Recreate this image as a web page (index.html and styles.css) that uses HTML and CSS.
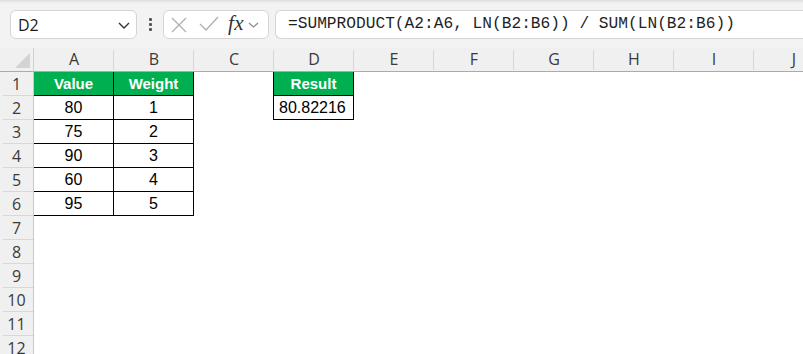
FILE: index.html
```html
<!DOCTYPE html>
<html>
<head>
<meta charset="utf-8">
<link rel="stylesheet" href="styles.css">
</head>
<body>
<div class="topbar">
  <div class="namebox">
    <span class="nb-text">D2</span>
    <svg class="nb-chev" width="12" height="7" viewBox="0 0 12 7"><path d="M1 1 L6 6 L11 1" fill="none" stroke="#333" stroke-width="1.4"/></svg>
  </div>
  <div class="vdots"><span></span><span></span><span></span></div>
  <div class="fxbox">
    <svg class="ic-x" width="16" height="16" viewBox="0 0 16 16"><path d="M1 1 L15 15 M15 1 L1 15" stroke="#b0b0b0" stroke-width="1.3" fill="none"/></svg>
    <svg class="ic-check" width="20" height="15" viewBox="0 0 20 15"><path d="M1 8 L7 14 L19 1" stroke="#b0b0b0" stroke-width="1.3" fill="none"/></svg>
    <span class="fx">fx</span>
    <svg class="fx-chev" width="11" height="6" viewBox="0 0 11 6"><path d="M1 1 L5.5 5 L10 1" fill="none" stroke="#8a8a8a" stroke-width="1.2"/></svg>
  </div>
  <div class="formula">=SUMPRODUCT(A2:A6, LN(B2:B6)) / SUM(LN(B2:B6))</div>
</div>

<div class="sheet">
  <div class="corner"><div class="tri"></div></div>
  <div class="colh">A</div><div class="colh">B</div><div class="colh">C</div><div class="colh">D</div><div class="colh">E</div><div class="colh">F</div><div class="colh">G</div><div class="colh">H</div><div class="colh">I</div><div class="colh">J</div>

  <div class="rowh">1</div>
  <div class="c hd first">Value</div><div class="c hd">Weight</div><div class="c"></div><div class="c hd first">Result</div><div class="c"></div><div class="c"></div><div class="c"></div><div class="c"></div><div class="c"></div><div class="c"></div>

  <div class="rowh">2</div>
  <div class="c bd first">80</div><div class="c bd">1</div><div class="c"></div><div class="c bd first left">80.82216</div><div class="c"></div><div class="c"></div><div class="c"></div><div class="c"></div><div class="c"></div><div class="c"></div>

  <div class="rowh">3</div>
  <div class="c bd first">75</div><div class="c bd">2</div><div class="c"></div><div class="c"></div><div class="c"></div><div class="c"></div><div class="c"></div><div class="c"></div><div class="c"></div><div class="c"></div>

  <div class="rowh">4</div>
  <div class="c bd first">90</div><div class="c bd">3</div><div class="c"></div><div class="c"></div><div class="c"></div><div class="c"></div><div class="c"></div><div class="c"></div><div class="c"></div><div class="c"></div>

  <div class="rowh">5</div>
  <div class="c bd first">60</div><div class="c bd">4</div><div class="c"></div><div class="c"></div><div class="c"></div><div class="c"></div><div class="c"></div><div class="c"></div><div class="c"></div><div class="c"></div>

  <div class="rowh">6</div>
  <div class="c bd first">95</div><div class="c bd">5</div><div class="c"></div><div class="c"></div><div class="c"></div><div class="c"></div><div class="c"></div><div class="c"></div><div class="c"></div><div class="c"></div>

  <div class="rowh">7</div><div class="c span"></div>
  <div class="rowh">8</div><div class="c span"></div>
  <div class="rowh">9</div><div class="c span"></div>
  <div class="rowh">10</div><div class="c span"></div>
  <div class="rowh">11</div><div class="c span"></div>
  <div class="rowh">12</div><div class="c span"></div>
</div>
</body>
</html>
```

FILE: styles.css
```css
html, body {
  margin: 0;
  padding: 0;
  background: #ffffff;
  overflow: hidden;
  width: 803px;
  height: 354px;
}
body {
  font-family: "Liberation Sans", Arial, sans-serif;
  color: #000;
}

.topbar {
  height: 48px;
  box-sizing: border-box;
  background: linear-gradient(#dcdcdc 0px, #ececec 2px, #f3f3f3 4px, #f3f3f3 100%);
  display: flex;
  align-items: flex-start;
  padding: 10px 0 0 10px;
  white-space: nowrap;
}
.namebox {
  width: 127px;
  height: 29px;
  box-sizing: border-box;
  background: #fff;
  border: 1px solid #d4d4d4;
  border-radius: 6px;
  display: flex;
  align-items: center;
  padding: 0 6px 0 7px;
  justify-content: space-between;
}
.nb-text {
  font-family: "Open Sans", "Noto Sans", sans-serif;
  font-size: 16px;
  color: #1a1a1a;
}
.nb-chev { margin-top: 1px; }
.vdots {
  width: 26px;
  height: 29px;
  display: flex;
  flex-direction: column;
  align-items: center;
  justify-content: center;
  gap: 2px;
}
.vdots span {
  width: 3px;
  height: 3px;
  background: #555;
  border-radius: 1px;
}
.fxbox {
  width: 106px;
  height: 29px;
  box-sizing: border-box;
  background: #fff;
  border: 1px solid #d4d4d4;
  border-radius: 6px;
  display: flex;
  align-items: center;
  padding: 0 0 0 7px;
}
.ic-x { margin-right: 12px; }
.ic-check { margin-right: 9px; margin-top: -2px; }
.fx {
  font-family: "Liberation Serif", "DejaVu Serif", serif;
  font-style: italic;
  font-size: 21px;
  color: #333;
  margin-right: 4px;
  margin-top: -2px;
  letter-spacing: 0.5px;
}
.fx-chev { margin-top: 1px; }
.formula {
  margin-left: 6px;
  flex: 1;
  height: 29px;
  box-sizing: border-box;
  background: #fff;
  border: 1px solid #d4d4d4;
  border-right: none;
  border-radius: 6px 0 0 6px;
  padding-left: 12px;
  font-family: "Liberation Mono", "DejaVu Sans Mono", monospace;
  font-size: 16.2px;
  line-height: 27px;
  color: #1f1f1f;
}

.sheet {
  display: grid;
  grid-template-columns: 34px repeat(10, 80px);
  grid-template-rows: 24px;
  grid-auto-rows: 24px;
}
.corner {
  background: #f0f0f0;
  border-bottom: 1px solid #ababab;
  border-right: 1px solid #d0d0d0;
  box-sizing: border-box;
  position: relative;
}
.tri {
  position: absolute;
  right: 3px;
  bottom: 3px;
  width: 0;
  height: 0;
  border-left: 15px solid transparent;
  border-bottom: 15px solid #d3d3d3;
}
.colh {
  background: #f0f0f0;
  border-bottom: 1px solid #ababab;
  box-sizing: border-box;
  text-align: center;
  font-family: "Open Sans", "Noto Sans", sans-serif;
  font-size: 16px;
  line-height: 23px;
  color: #3a3a3a;
  position: relative;
}
.colh::after {
  content: "";
  position: absolute;
  right: 0;
  top: 2px;
  bottom: 1px;
  width: 1px;
  background: #d8d8d8;
}
.rowh {
  grid-column: 1;
  background: #f0f0f0;
  border-right: 1px solid #c8c8c8;
  box-sizing: border-box;
  text-align: center;
  font-family: "Open Sans", "Noto Sans", sans-serif;
  font-size: 16px;
  line-height: 24px;
  color: #3a3a3a;
  position: relative;
}
.rowh::after {
  content: "";
  position: absolute;
  left: 3px;
  right: 0;
  bottom: 0;
  height: 1px;
  background: #d8d8d8;
}
.c {
  box-sizing: border-box;
  background: #fff;
  font-size: 16px;
  line-height: 23px;
  text-align: center;
}
.c.span { grid-column: 2 / span 10; }
.hd {
  background: #00b050;
  color: #fff;
  font-weight: bold;
  font-size: 15px;
  border-right: 1px solid #000;
  border-bottom: 1px solid #000;
}
.bd {
  border-right: 1px solid #000;
  border-bottom: 1px solid #000;
}
.first { box-shadow: -1px 0 0 #000; }
.left { text-align: left; padding-left: 5px; }
```
